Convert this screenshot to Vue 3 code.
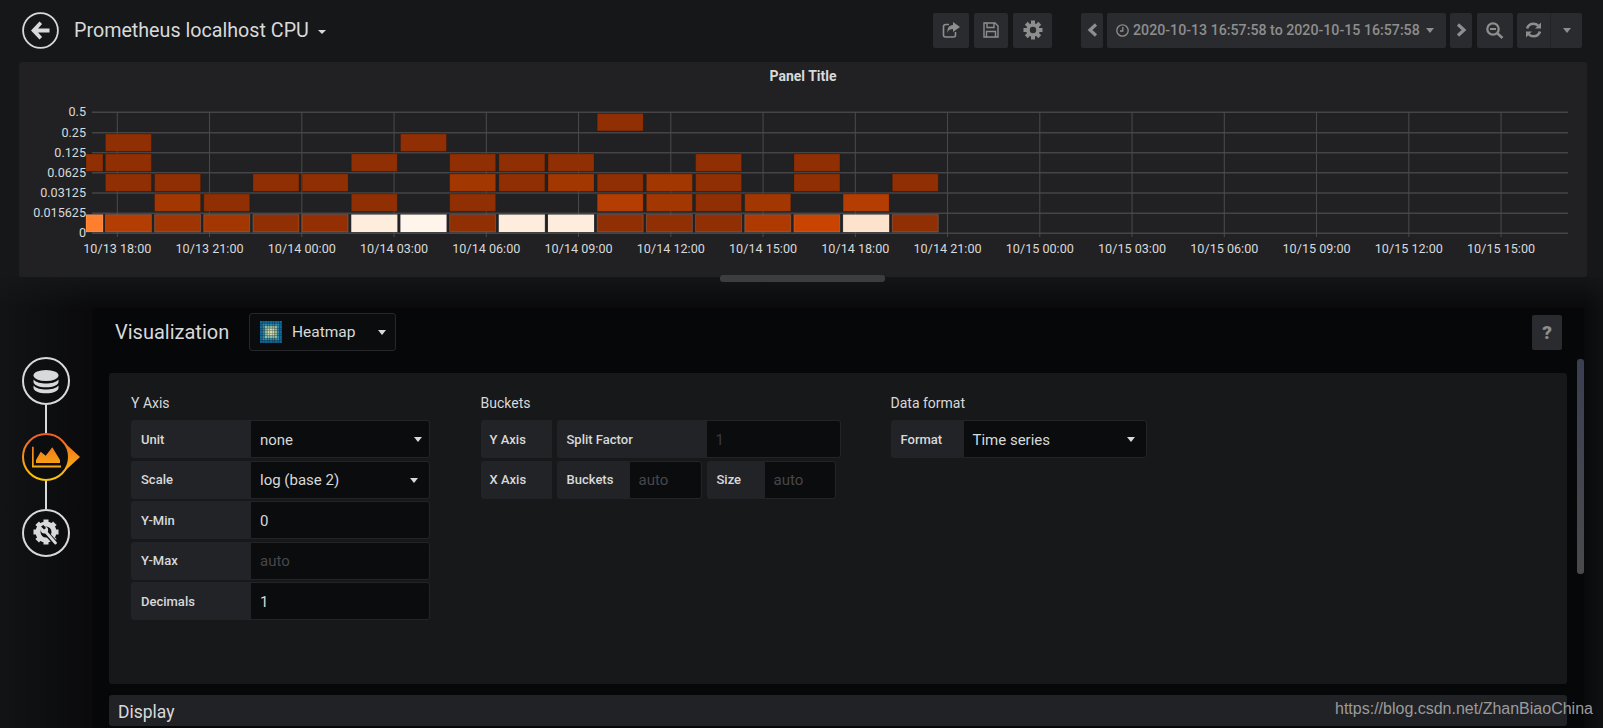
<script setup>
const ticks = ['10/13 18:00','10/13 21:00','10/14 00:00','10/14 03:00','10/14 06:00','10/14 09:00','10/14 12:00','10/14 15:00','10/14 18:00','10/14 21:00','10/15 00:00','10/15 03:00','10/15 06:00','10/15 09:00','10/15 12:00','10/15 15:00']
const tickX = i => 117.3 + i * 92.25
const hLines = [
  { y: 112.3, label: '0.5' }, { y: 132.7, label: '0.25' }, { y: 152.7, label: '0.125' },
  { y: 172.7, label: '0.0625' }, { y: 193, label: '0.03125' }, { y: 213.3, label: '0.015625' }, { y: 233.3, label: '0' }
]
const D = '#8f2f03', M = '#a33702', H = '#b33d02'
const rowY = { 1: 113.5, 2: 134, 3: 154, 4: 174, 5: 194, 6: 214.6 }
const raw = [
  [1, [[11, D]]],
  [2, [[1, D], [7, D]]],
  [3, [[0, D], [1, D], [6, D], [8, D], [9, D], [10, D], [13, D], [15, D]]],
  [4, [[1, D], [2, D], [4, D], [5, D], [8, M], [9, D], [10, M], [11, D], [12, M], [13, D], [15, D], [17, D]]],
  [5, [[2, M], [3, D], [6, D], [8, D], [11, H], [12, M], [13, D], [14, M], [16, H]]],
  [6, [[0, '#ff7f2e'], [1, H], [2, '#9f3502'], [3, M], [4, D], [5, '#932f03'], [6, '#feeddd'], [7, '#fff5eb'], [8, D], [9, '#feeddc'], [10, '#feeddc'], [11, D], [12, D], [13, D], [14, '#ae3a02'], [15, '#c94401'], [16, '#fee3cc'], [17, D]]]
]
const cells = raw.flatMap(([r, list]) => list.map(([c, fill]) => ({
  key: r + '-' + c,
  x: c === 0 ? 86 : 105.4 + (c - 1) * 49.18,
  w: c === 0 ? 17 : 46,
  y: rowY[r],
  h: 17.4,
  fill,
  stroke: r === 6 ? 'rgba(255,255,255,.16)' : 'rgba(0,0,0,.14)'
})))
const heatCells = []
for (let i = 0; i < 9; i++) for (let j = 0; j < 9; j++) {
  const d = Math.max(Math.abs(i - 4), Math.abs(j - 4))
  const fill = d === 4 ? '#0f6aa0' : d === 3 ? '#2f8aa8' : d === 2 ? '#8fb8a0' : '#cfd8b0'
  heatCells.push({ key: i + '-' + j, x: i * 2.45, y: j * 2.45, fill })
}
const teeth = [0, 45, 90, 135, 180, 225, 270, 315]
const yRows = [
  { label: 'Unit', value: 'none', caret: 'c1' },
  { label: 'Scale', value: 'log (base 2)', caret: 'c2' },
  { label: 'Y-Min', value: '0' },
  { label: 'Y-Max', value: 'auto', dim: true },
  { label: 'Decimals', value: '1' }
]
</script>

<template>
  <div class="page">
    <header class="navbar">
      <button class="back">
        <svg width="37" height="37" viewBox="0 0 37 37">
          <circle cx="18.5" cy="18.5" r="17.4" fill="none" stroke="#d8d9da" stroke-width="1.8" />
          <path d="M9 18.5 17.5 9.5l2.6 2.6-4 4.3H27.5v4.2H16.1l4 4.3-2.6 2.6Z" fill="#d8d9da" />
        </svg>
      </button>
      <h1 class="dash-title">Prometheus localhost CPU</h1>
      <span class="caret title-caret"></span>
      <div class="tools tools-a">
        <div class="tbtn w-share">
          <svg width="18" height="16" viewBox="0 0 18 16">
            <path d="M7 2.5H3.5a2 2 0 0 0-2 2V13a2 2 0 0 0 2 2h8a2 2 0 0 0 2-2v-3" fill="none" stroke="#8e8e8e" stroke-width="1.6" />
            <path d="M11 0l7 5-7 5V7C8 7 6 8 5.5 11 5 6 7 3.2 11 3Z" fill="#8e8e8e" />
          </svg>
        </div>
        <div class="tbtn w-save">
          <svg width="16" height="16" viewBox="0 0 16 16" fill="none" stroke="#8e8e8e" stroke-width="1.4">
            <path d="M1 1h11l3 3v11H1Z" />
            <path d="M4 1v4.5h7V1M3.500 15V9.500h9V15" />
          </svg>
        </div>
        <div class="tbtn w-cog">
          <svg width="20" height="20" viewBox="0 0 20 20">
            <g fill="#8e8e8e">
              <rect v-for="a in teeth" :key="a" x="8" y="0.5" width="4" height="5" :transform="`rotate(${a} 10 10)`" />
            </g>
            <circle cx="10" cy="10" r="5" fill="none" stroke="#8e8e8e" stroke-width="3.600" />
          </svg>
        </div>
      </div>
      <div class="tools tools-b">
        <div class="tbtn w-nav">
          <svg width="11" height="14" viewBox="0 0 11 14"><path d="M9 1.500 3 7l6 5.500" fill="none" stroke="#8e8e8e" stroke-width="3.200" /></svg>
        </div>
        <div class="tbtn w-time">
          <svg width="13" height="13" viewBox="0 0 13 13" fill="none" stroke="#8e8e8e" stroke-width="1.300">
            <circle cx="6.500" cy="6.500" r="5.700" />
            <path d="M6.800 3v4H4" />
          </svg>
          <span class="time-text">2020-10-13 16:57:58 to 2020-10-15 16:57:58</span>
          <span class="caret grey"></span>
        </div>
        <div class="tbtn w-nav">
          <svg width="11" height="14" viewBox="0 0 11 14"><path d="M2 1.500 8 7l-6 5.500" fill="none" stroke="#8e8e8e" stroke-width="3.200" /></svg>
        </div>
        <div class="tbtn w-zoom">
          <svg width="18" height="17" viewBox="0 0 18 17" fill="none" stroke="#8e8e8e">
            <circle cx="7" cy="7" r="5.700" stroke-width="2.300" />
            <path d="M4 7h6" stroke-width="2" />
            <path d="M11 11l5.500 5" stroke-width="2.600" />
          </svg>
        </div>
        <div class="refresh">
          <div class="ref-a">
            <svg width="17" height="16" viewBox="0 0 17 16" fill="none" stroke="#8e8e8e" stroke-width="2.600">
              <path d="M2 6.500C3 3.500 5.500 1.700 8.500 1.700c2 0 3.500.8 4.700 2" />
              <path d="M15 9.500C14 12.500 11.500 14.300 8.500 14.300c-2 0-3.500-.8-4.700-2" />
              <path d="M16 0.500V6.500H10Z" fill="#8e8e8e" stroke="none" />
              <path d="M1 15.500V9.500H7Z" fill="#8e8e8e" stroke="none" />
            </svg>
          </div>
          <div class="ref-b"><span class="caret grey"></span></div>
        </div>
      </div>
    </header>

    <section class="panel">
      <div class="panel-title">Panel Title</div>
      <svg class="chart" width="1568" height="189" viewBox="19 88 1568 189">
        <line v-for="l in hLines" :key="l.y" x1="92" x2="1568" :y1="l.y" :y2="l.y" class="grid-h" />
        <line v-for="(t, i) in ticks" :key="t" :x1="tickX(i)" :x2="tickX(i)" y1="112" y2="237" class="grid-v" />
        <rect v-for="c in cells" :key="c.key" :x="c.x" :y="c.y" :width="c.w" :height="c.h" :fill="c.fill" :stroke="c.stroke" />
        <text v-for="l in hLines" :key="'l' + l.y" x="86" :y="l.y + 3.800" text-anchor="end" class="tick">{{ l.label }}</text>
        <text v-for="(t, i) in ticks" :key="'t' + t" :x="tickX(i)" y="253" text-anchor="middle" class="tick">{{ t }}</text>
      </svg>
      <div class="handle"></div>
    </section>

    <div class="lower">
      <nav class="rail">
        <div class="step">
          <svg width="48" height="48" viewBox="0 0 48 48">
            <circle cx="24" cy="24" r="23" fill="none" stroke="#d8d9da" stroke-width="2" />
            <g fill="#d8d9da">
              <ellipse cx="24" cy="18.500" rx="12.500" ry="5.500" />
              <path d="M11.500 22.500C14 25.500 19 26.500 24 26.500S34 25.500 36.500 22.500V25C36.500 28 31 30.300 24 30.300S11.500 28 11.500 25Z" />
              <path d="M11.500 28.500C14 31.500 19 32.500 24 32.500S34 31.500 36.500 28.500V31C36.500 34 31 36.300 24 36.300S11.500 34 11.500 31Z" />
            </g>
          </svg>
        </div>
        <div class="link"></div>
        <div class="step">
          <svg class="active-svg" width="60" height="48" viewBox="0 0 60 48">
            <defs>
              <linearGradient id="og" gradientUnits="userSpaceOnUse" x1="0" y1="0" x2="0" y2="48">
                <stop offset="0" stop-color="#f05a28" />
                <stop offset="1" stop-color="#fbca0a" />
              </linearGradient>
            </defs>
            <path d="M39.500 7 58 24 39.500 41Z" fill="url(#og)" />
            <circle cx="24" cy="24" r="23" fill="#0c0d0f" stroke="url(#og)" stroke-width="2" />
            <path d="M10 13.700h1.700v18.800H39v2H10Z" fill="url(#og)" />
            <path d="M14 30V27L18.700 18.700 23.700 22.700 30.300 14.300 38 27V30Z" fill="url(#og)" />
          </svg>
        </div>
        <div class="link"></div>
        <div class="step">
          <svg width="48" height="48" viewBox="0 0 48 48">
            <circle cx="24" cy="24" r="23" fill="none" stroke="#d8d9da" stroke-width="2" />
            <g fill="#d8d9da">
              <rect v-for="a in teeth" :key="a" x="21.500" y="10.500" width="5" height="4.500" :transform="`rotate(${a} 24 23)`" />
            </g>
            <circle cx="24" cy="23" r="8" fill="none" stroke="#d8d9da" stroke-width="5" />
            <path d="M26 26 33 33.500" stroke="#0c0d0f" stroke-width="5" />
            <path d="M23 22 33.500 34" stroke="#d8d9da" stroke-width="2.800" stroke-linecap="round" />
            <circle cx="22.500" cy="21" r="3.600" fill="#d8d9da" />
            <path d="M22 20.500 19 17.500 21.500 16 24 19Z" fill="#0c0d0f" />
          </svg>
        </div>
      </nav>

      <main class="editor">
        <div class="editor-head">
          <div class="vis-title">Visualization</div>
          <div class="vis-picker">
            <svg width="22" height="22" viewBox="0 0 22 22">
              <rect v-for="c in heatCells" :key="c.key" :x="c.x" :y="c.y" width="2.300" height="2.300" :fill="c.fill" />
            </svg>
            <span class="vis-name">Heatmap</span>
            <span class="caret light vis-caret"></span>
          </div>
          <div class="help">?</div>
        </div>

        <div class="card">
          <div class="col col-y">
            <h5 class="sec">Y Axis</h5>
            <div v-for="r in yRows" :key="r.label" class="row">
              <div class="lab lab-y">{{ r.label }}</div>
              <div class="val grow" :class="{ dim: r.dim }">
                <span>{{ r.value }}</span>
                <span v-if="r.caret" class="caret light" :class="r.caret"></span>
              </div>
            </div>
          </div>
          <div class="col col-b">
            <h5 class="sec">Buckets</h5>
            <div class="row">
              <div class="lab lab-axis solo">Y Axis</div>
              <div class="lab lab-split">Split Factor</div>
              <div class="val dimmer w-split">1</div>
            </div>
            <div class="row">
              <div class="lab lab-axis solo">X Axis</div>
              <div class="lab lab-buckets">Buckets</div>
              <div class="val dim w-auto">auto</div>
              <div class="lab lab-size">Size</div>
              <div class="val dim w-auto2">auto</div>
            </div>
          </div>
          <div class="col col-f">
            <h5 class="sec">Data format</h5>
            <div class="row">
              <div class="lab lab-format">Format</div>
              <div class="val grow">
                <span>Time series</span>
                <span class="caret light c2"></span>
              </div>
            </div>
          </div>
        </div>

        <div class="display">Display</div>
        <div class="scrollbar"></div>
      </main>
    </div>

    <div class="watermark">https://blog.csdn.net/ZhanBiaoChina</div>
  </div>
</template>

<style scoped>
.page {
  position: relative;
  width: 1603px;
  height: 728px;
  overflow: hidden;
  background: #161719;
  color: #d8d9da;
  font-family: Roboto, "Noto Sans", sans-serif;
}
.navbar {
  display: flex;
  align-items: center;
  height: 62px;
  padding: 0 21px 2px 22px;
  box-sizing: border-box;
}
.back {
  display: flex;
  width: 37px;
  height: 37px;
  padding: 0;
  border: 0;
  background: none;
}
.dash-title {
  margin: 0 0 0 15px;
  font-size: 19.700px;
  font-weight: 400;
  line-height: 37px;
  color: #d8d9da;
}
.caret {
  display: inline-block;
  width: 0;
  height: 0;
  border-left: 4.5px solid transparent;
  border-right: 4.5px solid transparent;
  border-top: 5px solid #d8d9da;
}
.caret.grey { border-top-color: #8e8e8e; }
.title-caret {
  margin: 4px 0 0 9px;
  border-left-width: 4px;
  border-right-width: 4px;
  border-top-width: 4px;
}
.tools { display: flex; }
.tools-a { gap: 5px; margin-left: auto; }
.tools-b { gap: 4px; margin-left: 29px; }
.tbtn {
  display: flex;
  align-items: center;
  justify-content: center;
  height: 35px;
  box-sizing: border-box;
  background: #2a2b2e;
  border-radius: 2px;
  flex: none;
}
.w-share { width: 36px; }
.w-save { width: 34px; }
.w-cog { width: 39px; }
.w-nav { width: 22px; }
.w-time {
  width: 339px;
  justify-content: flex-start;
  padding-left: 9px;
  color: #8e8e8e;
}
.time-text {
  margin-left: 4px;
  font-size: 14.200px;
  font-weight: 500;
  white-space: nowrap;
}
.w-time .caret { margin-left: 6px; }
.w-zoom { width: 36px; margin-left: 1px; }
.refresh {
  display: flex;
  width: 65px;
  height: 35px;
  background: #2a2b2e;
  border-radius: 2px;
}
.ref-a {
  display: flex;
  align-items: center;
  justify-content: center;
  width: 34px;
  border-right: 1px solid #222326;
  box-sizing: border-box;
}
.ref-b {
  display: flex;
  align-items: center;
  justify-content: center;
  flex: 1;
}

.panel {
  position: relative;
  height: 215px;
  margin: 0 16px 0 19px;
  background: #212124;
  border-radius: 3px;
}
.panel-title {
  height: 26px;
  line-height: 28px;
  font-size: 14px;
  font-weight: 700;
  text-align: center;
  color: #d8d9da;
}
.chart { display: block; }
.grid-h { stroke: #454547; stroke-width: 1.5; }
.grid-v { stroke: #4b4b4d; stroke-width: 1; }
.tick {
  font-family: Roboto, sans-serif;
  font-size: 12.6px;
  fill: #d8d9da;
}
.handle {
  position: absolute;
  left: 701px;
  bottom: -5px;
  width: 165px;
  height: 7px;
  border-radius: 3px;
  background: #3c3d40;
}

.lower {
  display: flex;
  height: 451px;
  padding-top: 31px;
  box-sizing: border-box;
  background:
    linear-gradient(180deg, rgba(22,23,25,.85) 0, rgba(10,10,12,0) 31px),
    linear-gradient(90deg, #121315 0, #0a0a0c 92px, #0a0a0c 1584px, #0f1012 100%);
}
.rail {
  flex: none;
  display: flex;
  flex-direction: column;
  align-items: flex-start;
  width: 92px;
  padding: 49px 0 0 22px;
  box-sizing: border-box;
}
.step { display: flex; height: 48px; }
.link {
  width: 2px;
  height: 28px;
  margin-left: 23px;
  background: #d8d9da;
}
.editor {
  position: relative;
  width: 1492px;
  flex: none;
  background: #060709;
  border-radius: 3px 3px 0 0;
  padding: 0 17px 0 17px;
  box-sizing: border-box;
}
.editor-head {
  display: flex;
  align-items: flex-start;
  height: 65px;
  padding-top: 5px;
  box-sizing: border-box;
}
.vis-title {
  width: 134px;
  margin-left: 6px;
  font-size: 20px;
  line-height: 38px;
  color: #d8d9da;
}
.vis-picker {
  display: flex;
  align-items: center;
  width: 147px;
  height: 38px;
  padding-left: 10px;
  box-sizing: border-box;
  background: #0b0c0e;
  border: 1px solid #26272a;
  border-radius: 3px;
}
.vis-name {
  margin-left: 10px;
  font-size: 15.500px;
  color: #d8d9da;
}
.vis-caret { margin-left: auto; margin-right: 9px; }
.help {
  width: 30px;
  height: 35px;
  margin: 2px 5px 0 auto;
  line-height: 35px;
  text-align: center;
  font-size: 19px;
  font-weight: 900;
  color: #8e8e8e;
  background: #2a2b2e;
  border-radius: 2px;
}
.card {
  display: flex;
  height: 311px;
  padding: 20px 0 0 22px;
  box-sizing: border-box;
  background: #17181a;
  border-radius: 3px;
}
.col { flex: none; }
.col-y { width: 299px; margin-right: 50.500px; }
.col-b { width: 361px; margin-right: 49px; }
.col-f { width: 256px; }
.sec {
  margin: 0 0 7px;
  font-size: 14px;
  font-weight: 400;
  line-height: 20px;
  color: #d8d9da;
}
.row {
  display: flex;
  height: 38px;
  margin-bottom: 2.500px;
}
.lab {
  display: flex;
  align-items: center;
  flex: none;
  height: 38px;
  box-sizing: border-box;
  padding-left: 10px;
  font-size: 13px;
  font-weight: 500;
  color: #d8d9da;
  background: #222327;
  border-radius: 3px 0 0 3px;
}
.val {
  display: flex;
  align-items: center;
  flex: none;
  box-sizing: border-box;
  height: 38px;
  padding: 1px 0 0 9px;
  font-size: 15px;
  color: #d8d9da;
  background: #0b0c0e;
  border: 1px solid #232427;
  border-left: 0;
  border-radius: 0 3px 3px 0;
}
.val.grow { flex: 1; }
.val.dim { color: #46474b; }
.val.dimmer { color: #3a3b40; }
.val .caret { margin-left: auto; }
.c1 { margin-right: 7px; }
.c2 { margin-right: 11px; }
.lab-y { width: 120px; }
.lab-axis { width: 71px; padding-left: 9px; }
.solo { margin-right: 5px; }
.lab-split { width: 150px; }
.w-split { width: 134px; }
.lab-buckets { width: 73px; }
.w-auto { width: 72px; margin-right: 5px; }
.lab-size { width: 58px; }
.w-auto2 { width: 71px; }
.lab-format { width: 73px; }
.display {
  height: 31px;
  margin-top: 11px;
  padding-left: 9px;
  line-height: 35px;
  font-size: 17.500px;
  color: #d8d9da;
  background: #212226;
  border-radius: 3px;
  overflow: hidden;
}
.scrollbar {
  position: absolute;
  top: 51px;
  right: 0;
  width: 7px;
  height: 215px;
  border-radius: 3px;
  background: linear-gradient(180deg, #3b3f52, #4a4a4c);
}
.watermark {
  position: absolute;
  left: 1335px;
  top: 700px;
  font-family: "Liberation Sans", Arial, sans-serif;
  font-size: 16px;
  line-height: 18px;
  color: #9b9b9b;
  white-space: nowrap;
}
</style>

<style>
html, body { background: #161719; }
</style>
